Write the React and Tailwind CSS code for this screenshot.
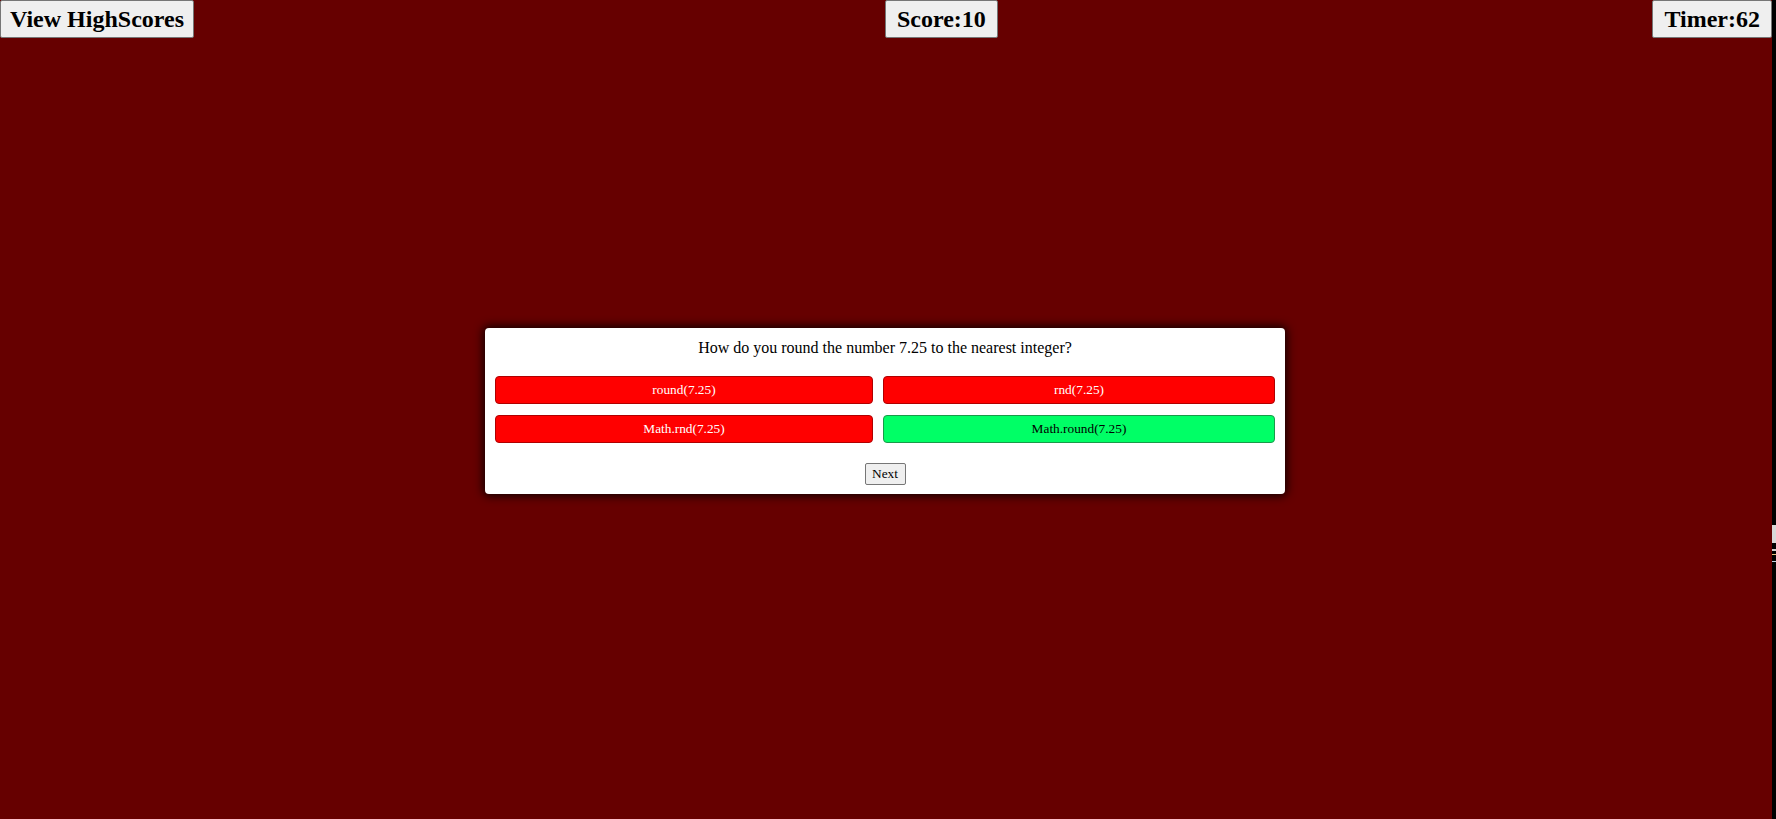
export default function App() {
  const serif = { fontFamily: '"Liberation Serif", "Times New Roman", serif' };
  return (
    <div className="flex h-[819px] w-full overflow-hidden" style={serif}>
      <div className="flex flex-1 flex-col bg-[#660000]">
        <div className="flex items-start">
          <button className="h-[38px] rounded-[2px] border border-[#767676] bg-[#efefef] px-[9px] text-[24px] font-bold leading-none text-black">
            View HighScores
          </button>
          <button className="ml-[691px] h-[38px] rounded-[2px] border border-[#767676] bg-[#efefef] px-[11px] text-[24px] font-bold leading-none text-black">
            Score:10
          </button>
          <button className="ml-auto h-[38px] rounded-[2px] border border-[#767676] bg-[#efefef] px-[11px] text-[24px] font-bold leading-none text-black">
            Timer:62
          </button>
        </div>
        <div className="ml-[485px] mt-[290px] flex h-[166px] w-[800px] flex-col items-center rounded-[4px] bg-white px-[10px] pt-[11px] shadow-[0_0_10px_2px_rgba(0,0,0,0.85)]">
          <p className="text-[16px] leading-[18px] text-black">
            How do you round the number 7.25 to the nearest integer?
          </p>
          <div className="mt-[19px] grid w-full grid-cols-[378px_392px] gap-x-[10px] gap-y-[11px]">
            <button className="h-[28px] rounded-[4px] border border-[#b00000] bg-[#ff0000] text-[13.33px] text-white">
              round(7.25)
            </button>
            <button className="h-[28px] rounded-[4px] border border-[#b00000] bg-[#ff0000] text-[13.33px] text-white">
              rnd(7.25)
            </button>
            <button className="h-[28px] rounded-[4px] border border-[#b00000] bg-[#ff0000] text-[13.33px] text-white">
              Math.rnd(7.25)
            </button>
            <button className="h-[28px] rounded-[4px] border border-[#1a9a4a] bg-[#00ff66] text-[13.33px] text-black">
              Math.round(7.25)
            </button>
          </div>
          <button className="mt-[20px] h-[22px] w-[41px] rounded-[2px] border border-[#767676] bg-[#efefef] text-[13.33px] leading-none text-black">
            Next
          </button>
        </div>
      </div>
      <div className="flex w-[4px] flex-col bg-black">
        <div className="mt-[525px] h-[18px] w-full bg-[#d8d8d8]" />
        <div className="mt-[6px] h-[2px] w-full bg-[#cfcfcf]" />
        <div className="mt-[3px] h-[1px] w-full bg-[#e8c080]" />
        <div className="mt-[6px] h-[1px] w-full bg-[#c0d0e0]" />
      </div>
    </div>
  );
}
